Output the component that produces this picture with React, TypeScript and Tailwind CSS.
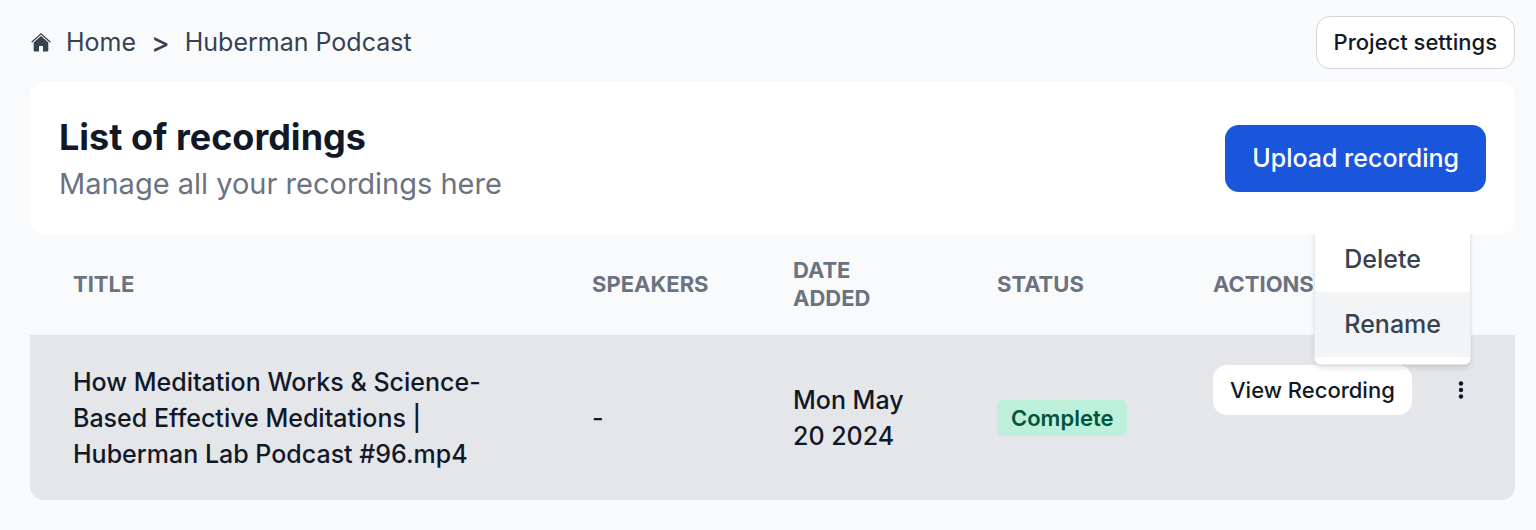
import React from "react";

type Recording = {
  id: number;
  title: string;
  speakers: string;
  dateAdded: string;
  status: string;
};

const recordings: Recording[] = [
  {
    id: 1,
    title: "How Meditation Works & Science-Based Effective Meditations | Huberman Lab Podcast #96.mp4",
    speakers: "-",
    dateAdded: "Mon May 20 2024",
    status: "Complete",
  },
];

function HomeIcon() {
  return (
    <svg className="size-[22px]" viewBox="0 0 22 22" fill="none" aria-hidden="true">
      <path d="M1.6 11.3 11 2.8l9.4 8.5" stroke="currentColor" strokeWidth="1.3" />
      <path
        d="M11 4.9 18.3 11.6V19.400a1 1 0 0 1-1 1h-4.300v-4.600a.8.8 0 0 0-.8-.8H9.8a.8.8 0 0 0-.8.8V20.400H4.700a1 1 0 0 1-1-1V11.600z"
        fill="currentColor"
      />
    </svg>
  );
}

function DotsIcon() {
  return (
    <svg className="h-5 w-[6px]" viewBox="0 0 6 20" fill="currentColor" aria-hidden="true">
      <circle cx="3" cy="3.5" r="2.2" />
      <circle cx="3" cy="10" r="2.2" />
      <circle cx="3" cy="16.5" r="2.2" />
    </svg>
  );
}

function Breadcrumb() {
  return (
    <nav aria-label="Breadcrumb" className="flex items-center pb-[2px] text-[25px] leading-9 text-[#374151]">
      <a href="#home" className="flex items-center gap-[14px]">
        <HomeIcon />
        Home
      </a>
      <span className="mx-[15px] pt-[2px] text-[28px] font-medium">&gt;</span>
      <a href="#project">Huberman Podcast</a>
    </nav>
  );
}

function RowMenu() {
  return (
    <div className="relative">
      <button
        type="button"
        aria-label="Recording options"
        className="flex h-[50px] w-5 items-center justify-center"
      >
        <DotsIcon />
      </button>
      <div
        role="menu"
        className="absolute right-0 bottom-full rounded-[6px] border border-[#e5e7eb] bg-white py-[7px] text-left shadow-md"
      >
        {["Delete", "Rename"].map((label) => (
          <button
            key={label}
            type="button"
            role="menuitem"
            className={`block w-full px-[29px] pt-[14px] pb-[15px] text-left text-[25px] leading-9 text-[#374151] ${
              label === "Rename" ? "bg-[#f3f4f6]" : ""
            }`}
          >
            {label}
          </button>
        ))}
      </div>
    </div>
  );
}

export default function App() {
  return (
    <main className="min-h-screen bg-[#f9fafc] pt-4 pr-[21px] pb-[30px] pl-[30px] font-['Inter',sans-serif] text-[#111928]">
      <div className="mb-[14px] flex items-center justify-between">
        <Breadcrumb />
        <button
          type="button"
          className="h-[53px] rounded-[14px] border border-[#d1d5db] bg-white px-[17px] text-[22px] font-medium"
        >
          Project settings
        </button>
      </div>

      <section className="relative z-10 flex items-center justify-between rounded-[14px] bg-white px-[29px] py-[29px]">
        <div>
          <h1 className="text-[36px] leading-[50px] font-bold">List of recordings</h1>
          <p className="text-[29px] leading-[43px] text-[#6b7280]">Manage all your recordings here</p>
        </div>
        <button
          type="button"
          className="h-[67px] rounded-[14px] bg-[#1a56db] px-[27px] text-[25px] font-medium text-white"
        >
          Upload recording
        </button>
      </section>

      <table className="w-full table-fixed text-left">
        <thead className="text-[22px] leading-7 text-[#6b7280] uppercase">
          <tr className="h-[101px]">
            <th className="w-[519px] px-[44px] pb-[2px] pl-[43px] font-bold">Title</th>
            <th className="w-[201px] px-[44px] pb-[2px] pl-[43px] font-bold">Speakers</th>
            <th className="w-[204px] px-[44px] pb-[2px] pl-[43px] font-bold">Date added</th>
            <th className="w-[216px] px-[44px] pb-[2px] pl-[43px] font-bold">Status</th>
            <th className="px-[44px] pb-[2px] pl-[43px] font-bold">Actions</th>
          </tr>
        </thead>
        <tbody className="text-[25px] leading-9 font-medium">
          {recordings.map((rec) => (
            <tr key={rec.id} className="h-[165px] bg-[#e5e6ea]">
              <td className="rounded-bl-[14px] px-[44px] pl-[43px]">{rec.title}</td>
              <td className="px-[44px] pl-[43px]">{rec.speakers}</td>
              <td className="px-[44px] pl-[43px]">{rec.dateAdded}</td>
              <td className="px-[44px] pl-[43px]">
                <span className="flex h-9 w-fit items-center rounded-[6px] bg-[#bcf0da] px-[14px] text-[22px] font-semibold text-[#03543f]">
                  {rec.status}
                </span>
              </td>
              <td className="rounded-br-[14px] px-[44px] pt-[30px] pl-[43px] align-top">
                <div className="flex items-center justify-between">
                  <button
                    type="button"
                    className="h-[50px] rounded-[14px] bg-white px-[17px] text-[22px] font-medium whitespace-nowrap"
                  >
                    View Recording
                  </button>
                  <RowMenu />
                </div>
              </td>
            </tr>
          ))}
        </tbody>
      </table>
    </main>
  );
}
